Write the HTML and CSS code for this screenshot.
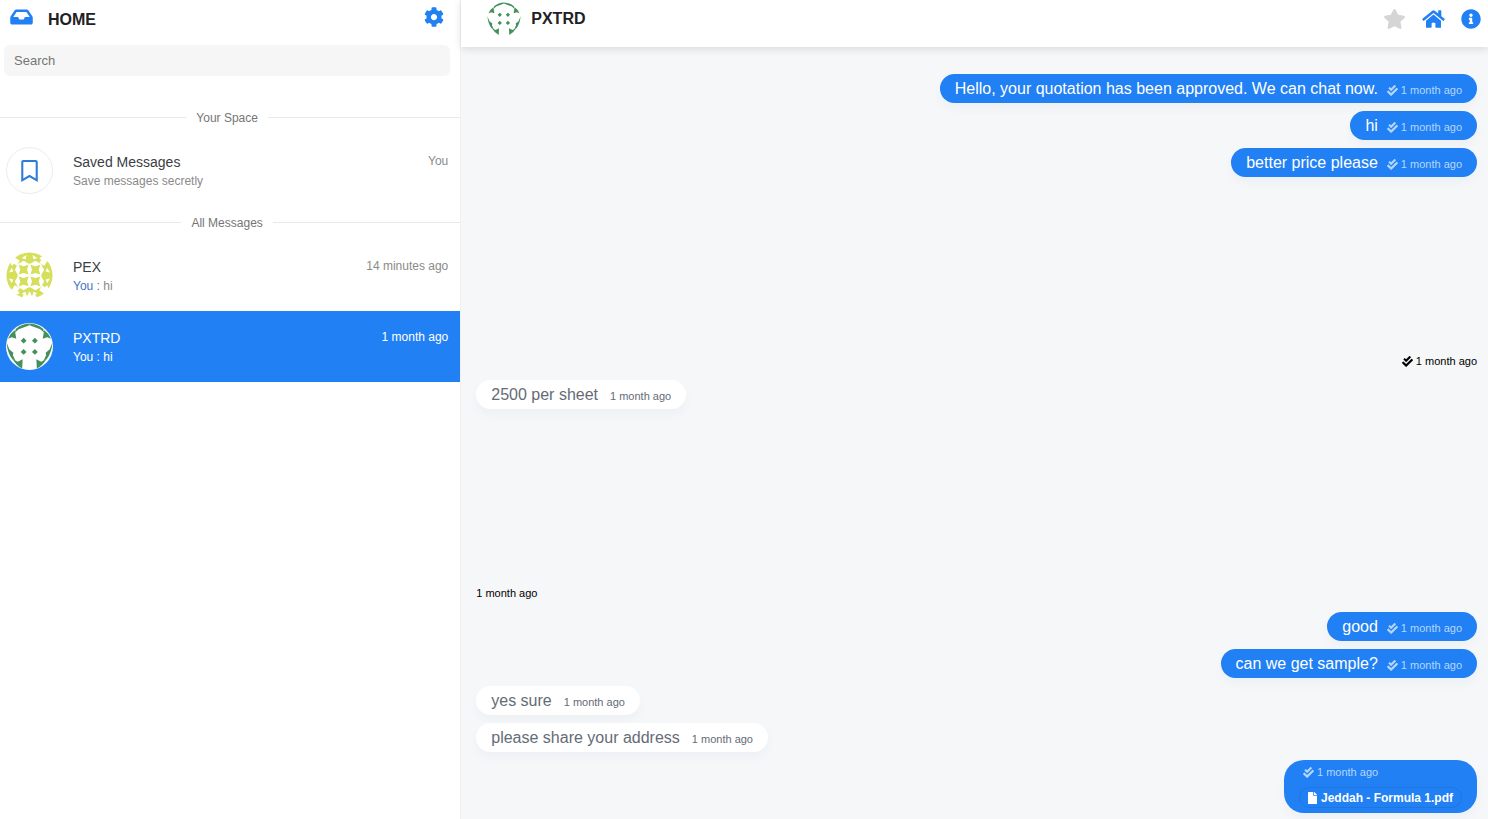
FILE: index.html
```html
<!DOCTYPE html>
<html lang="en">
<head>
<meta charset="utf-8">
<title>Messenger</title>
<link rel="stylesheet" href="styles.css">
</head>
<body>
<svg class="sprite" aria-hidden="true">
  <symbol id="inbox" viewBox="0 0 576 512"><path d="M567.938 243.908L462.25 85.374A48.003 48.003 0 0 0 422.311 64H153.689a48 48 0 0 0-39.938 21.374L8.062 243.908A47.994 47.994 0 0 0 0 270.533V400c0 26.51 21.49 48 48 48h480c26.51 0 48-21.49 48-48V270.533a47.994 47.994 0 0 0-8.062-26.625zM162.252 128h251.497l85.333 128H376l-32 64H232l-32-64H76.918l85.334-128z"/></symbol>
  <symbol id="cog" viewBox="0 0 512 512"><path d="M487.4 315.7l-42.6-24.6c4.3-23.2 4.3-47 0-70.2l42.6-24.6c4.9-2.8 7.1-8.6 5.5-14-11.1-35.6-30-67.8-54.7-94.6-3.8-4.1-10-5.1-14.8-2.3L380.8 110c-17.9-15.4-38.5-27.3-60.8-35.1V25.8c0-5.6-3.9-10.5-9.4-11.7-36.7-8.2-74.3-7.8-109.2 0-5.5 1.2-9.4 6.1-9.4 11.7V75c-22.2 7.9-42.8 19.8-60.8 35.1L88.7 85.5c-4.9-2.8-11-1.9-14.8 2.3-24.7 26.7-43.6 58.9-54.7 94.6-1.7 5.4.6 11.2 5.5 14L67.3 221c-4.3 23.2-4.3 47 0 70.2l-42.6 24.6c-4.9 2.8-7.1 8.6-5.5 14 11.1 35.6 30 67.8 54.7 94.6 3.8 4.1 10 5.1 14.8 2.3l42.6-24.6c17.9 15.4 38.5 27.3 60.8 35.1v49.2c0 5.6 3.9 10.5 9.4 11.7 36.7 8.2 74.3 7.8 109.2 0 5.5-1.2 9.4-6.1 9.4-11.7v-49.2c22.2-7.9 42.8-19.8 60.8-35.1l42.6 24.6c4.9 2.8 11 1.9 14.8-2.3 24.7-26.7 43.6-58.9 54.7-94.6 1.5-5.5-.7-11.3-5.6-14.1zM256 336c-44.1 0-80-35.9-80-80s35.9-80 80-80 80 35.9 80 80-35.9 80-80 80z"/></symbol>
  <symbol id="star" viewBox="0 0 576 512"><path d="M259.3 17.8L194 150.2 47.9 171.5c-26.2 3.8-36.7 36.1-17.7 54.6l105.7 103-25 145.5c-4.5 26.3 23.2 46 46.4 33.7L288 439.6l130.7 68.7c23.2 12.2 50.9-7.4 46.4-33.7l-25-145.5 105.7-103c19-18.5 8.5-50.8-17.7-54.6L382 150.2 316.7 17.8c-11.7-23.6-45.6-23.9-57.4 0z"/></symbol>
  <symbol id="home" viewBox="0 0 576 512"><path d="M280.37 148.26L96 300.11V464a16 16 0 0 0 16 16l112.06-.29a16 16 0 0 0 15.92-16V368a16 16 0 0 1 16-16h64a16 16 0 0 1 16 16v95.64a16 16 0 0 0 16 16.05L464 480a16 16 0 0 0 16-16V300L295.67 148.26a12.19 12.19 0 0 0-15.3 0zM571.6 251.47L488 182.56V44.05a12 12 0 0 0-12-12h-56a12 12 0 0 0-12 12v72.61L318.47 43a48 48 0 0 0-61 0L4.34 251.47a12 12 0 0 0-1.6 16.9l25.5 31A12 12 0 0 0 45.15 301l235.22-193.74a12.19 12.19 0 0 1 15.3 0L530.9 301a12 12 0 0 0 16.9-1.6l25.5-31a12 12 0 0 0-1.7-16.93z"/></symbol>
  <symbol id="info" viewBox="0 0 512 512"><path d="M256 8C119.043 8 8 119.083 8 256c0 136.997 111.043 248 248 248s248-111.003 248-248C504 119.083 392.957 8 256 8zm0 110c23.196 0 42 18.804 42 42s-18.804 42-42 42-42-18.804-42-42 18.804-42 42-42zm56 254c0 6.627-5.373 12-12 12h-88c-6.627 0-12-5.373-12-12v-24c0-6.627 5.373-12 12-12h12v-64h-12c-6.627 0-12-5.373-12-12v-24c0-6.627 5.373-12 12-12h64c6.627 0 12 5.373 12 12v100h12c6.627 0 12 5.373 12 12v24z"/></symbol>
  <symbol id="check" viewBox="0 0 512 512"><path d="M505 174.8l-39.6-39.6c-9.4-9.4-24.6-9.4-33.9 0L192 374.7 80.6 263.2c-9.4-9.4-24.6-9.4-33.9 0L7 302.900c-9.4 9.4-9.4 24.6 0 34L175 505c9.4 9.4 24.6 9.4 33.9 0l296-296.2c9.4-9.5 9.4-24.7.1-34zm-324.3 106c6.2 6.3 16.4 6.3 22.6 0l208-208.2c6.2-6.3 6.2-16.4 0-22.6L366.1 4.7c-6.2-6.3-16.4-6.3-22.6 0L192 156.2l-55.4-55.5c-6.2-6.3-16.4-6.3-22.6 0L68.7 146c-6.2 6.3-6.2 16.4 0 22.6l112 112.2z"/></symbol>
  <symbol id="file" viewBox="0 0 384 512"><path d="M224 136V0H24C10.7 0 0 10.7 0 24v464c0 13.3 10.7 24 24 24h336c13.3 0 24-10.7 24-24V160H248c-13.2 0-24-10.8-24-24zm160-14.1v6.1H256V0h6.1c6.4 0 12.5 2.5 17 7l97.9 98c4.5 4.5 7 10.6 7 16.9z"/></symbol>
  <symbol id="bookmark" viewBox="0 0 384 512"><path d="M336 0H48C21.49 0 0 21.49 0 48v464l192-112 192 112V48c0-26.51-21.49-48-48-48zm0 428.43l-144-84-144 84V54a6 6 0 0 1 6-6h276c3.314 0 6 2.683 6 5.996V428.43z"/></symbol>
  <symbol id="face-green" viewBox="0 0 48 48">
    <circle cx="24" cy="24" r="24" fill="#fff"/>
    <g fill="#43905a">
      <path d="M18 15l3 3-3 3-3-3zM29.500 15l3 3-3 3-3-3zM18 26.500l3 3-3 3-3-3zM29.500 26.500l3 3-3 3-3-3z"/>
      <g id="half">
        <path d="M10 6Q16 1 24 .6V2.200L13 6.500 9 10z"/>
        <path d="M2 16Q4 11 9 7.500L10.500 16 6 14.500z"/>
        <path d="M.6 20L3.500 27 7.500 30.500 7 33 9.500 38 6.500 37Q1.500 31 .6 20z"/>
        <path d="M6.500 36.500L12 39.500 17 37 16.500 46.500Q10.500 43.500 6.500 36.500z"/>
      </g>
      <use href="#half" transform="matrix(-1 0 0 1 48 0)"/>
    </g>
  </symbol>
  <symbol id="face-lime" viewBox="0 0 48 48">
    <circle cx="24" cy="24" r="23.500" fill="#d5df5b"/>
    <g fill="#fff">
      <path d="M12 12h24v24H12z"/>
      <g id="side">
        <path d="M12 12.500L18 9l6 3.500L30 9l6 3.500z"/>
        <path d="M16 6l5-3-1 4.500zM32 6l-5-3 1 4.500z"/>
        <path d="M9 5.500L14 9 11 14 8.500 12 6 14 4 10z"/>
      </g>
      <use href="#side" transform="rotate(90 24 24)"/>
      <use href="#side" transform="rotate(180 24 24)"/>
      <use href="#side" transform="rotate(270 24 24)"/>
      <path d="M16 48l3-7 2.500 4L24 40l2.500 5 2.500-4 3 7z"/>
    </g>
    <path fill="#d5df5b" d="M13 13l5 1.500L23 13l-1.500 5L23 23l-5-1.500L13 23l1.500-5zM25 13l5 1.500L35 13l-1.500 5L35 23l-5-1.500L25 23l1.500-5zM13 25l5 1.500L23 25l-1.500 5L23 35l-5-1.500L13 35l1.500-5zM25 25l5 1.500L35 25l-1.500 5L35 35l-5-1.500L25 35l1.500-5z"/>
  </symbol>
</svg>
<div class="messenger">
  <aside class="sidebar">
    <header class="sidebar-head">
      <a href="#" class="brand"><svg class="icon-inbox"><use href="#inbox"/></svg><span>HOME</span></a>
      <button class="icon-button" aria-label="Settings"><svg class="icon-20"><use href="#cog"/></svg></button>
    </header>
    <div class="search"><input type="text" aria-label="Search" placeholder="Search"></div>
    <h2 class="divider"><span>Your Space</span></h2>
    <a href="#" class="contact">
      <span class="avatar saved"><svg><use href="#bookmark"/></svg></span>
      <span class="contact-body"><span class="contact-name">Saved Messages</span><span class="contact-last">Save messages secretly</span></span>
      <span class="contact-time">You</span>
    </a>
    <h2 class="divider"><span>All Messages</span></h2>
    <a href="#" class="contact">
      <span class="avatar"><svg><use href="#face-lime"/></svg></span>
      <span class="contact-body"><span class="contact-name">PEX</span><span class="contact-last"><span class="you">You :</span> hi</span></span>
      <span class="contact-time">14 minutes ago</span>
    </a>
    <a href="#" class="contact active">
      <span class="avatar"><svg><use href="#face-green"/></svg></span>
      <span class="contact-body"><span class="contact-name">PXTRD</span><span class="contact-last"><span class="you">You :</span> hi</span></span>
      <span class="contact-time">1 month ago</span>
    </a>
  </aside>
  <main class="chat">
    <header class="chat-head">
      <a href="#" class="peer"><svg><use href="#face-green"/></svg><span>PXTRD</span></a>
      <nav class="tools">
        <button class="icon-button muted" aria-label="Favourite"><svg class="icon-wide"><use href="#star"/></svg></button>
        <a href="#" class="icon-button" aria-label="Home"><svg class="icon-wide"><use href="#home"/></svg></a>
        <button class="icon-button" aria-label="Details"><svg class="icon-20"><use href="#info"/></svg></button>
      </nav>
    </header>
    <section class="thread">
      <p class="bubble mine">Hello, your quotation has been approved. We can chat now.<span class="time"><svg><use href="#check"/></svg>1 month ago</span></p>
      <p class="bubble mine">hi<span class="time"><svg><use href="#check"/></svg>1 month ago</span></p>
      <p class="bubble mine">better price please<span class="time"><svg><use href="#check"/></svg>1 month ago</span></p>
      <figure class="photo sent"><div class="photo-image"></div><figcaption><svg><use href="#check"/></svg>1 month ago</figcaption></figure>
      <p class="bubble">2500 per sheet<span class="time">1 month ago</span></p>
      <figure class="photo"><div class="photo-image"></div><figcaption>1 month ago</figcaption></figure>
      <p class="bubble mine">good<span class="time"><svg><use href="#check"/></svg>1 month ago</span></p>
      <p class="bubble mine">can we get sample?<span class="time"><svg><use href="#check"/></svg>1 month ago</span></p>
      <p class="bubble">yes sure<span class="time">1 month ago</span></p>
      <p class="bubble">please share your address<span class="time">1 month ago</span></p>
      <div class="bubble mine attachment"><span class="time"><svg><use href="#check"/></svg>1 month ago</span><a href="#" class="download"><svg><use href="#file"/></svg>Jeddah - Formula 1.pdf</a></div>
    </section>
  </main>
</div>
</body>
</html>
```
FILE: styles.css
```css
* { box-sizing: border-box; }
body {
  margin: 0;
  background: #fff;
  color: #202124;
  font-family: "Liberation Sans", Arial, sans-serif;
  font-size: 16px;
}
a { color: inherit; text-decoration: none; }
svg { display: block; flex: none; fill: currentColor; }
.sprite { position: absolute; width: 0; height: 0; }

.messenger { display: flex; min-height: 100vh; }

/* Sidebar */
.sidebar {
  flex: 0 0 31%;
  min-width: 0;
  border-right: 1px solid #eef0f4;
  overflow: hidden;
}
.sidebar-head {
  display: flex;
  align-items: center;
  justify-content: space-between;
  height: 38px;
  padding: 0 16px 0 10px;
}
.brand { display: flex; align-items: center; gap: 15px; font-weight: bold; }
.brand .icon-inbox { width: 23px; height: 20px; color: #2180f3; margin-bottom: 4px; }
.brand span { padding-top: 2px; }
.sidebar-head .icon-button { margin-bottom: 4px; }
.icon-button {
  display: block;
  padding: 0;
  border: 0;
  background: none;
  color: #2180f3;
  cursor: pointer;
}
.icon-button.muted { color: #d5d5d5; }
.icon-20 { width: 20px; height: 20px; }
.icon-wide { width: 23px; height: 20px; }
.search { padding: 7px 10px 25px 4px; }
.search input {
  display: block;
  width: 100%;
  height: 31px;
  padding: 0 10px;
  border: 0;
  border-radius: 6px;
  background: #f6f6f6;
  font: 13px "Liberation Sans", Arial, sans-serif;
}
.search input::placeholder { color: #757575; opacity: 1; }
.divider {
  display: flex;
  align-items: center;
  gap: 10px;
  height: 34px;
  margin: 0 0 0 -6px;
  color: #757575;
  font-size: 12px;
  font-weight: normal;
}
.divider::before, .divider::after {
  content: "";
  flex: 1;
  height: 1px;
  margin-bottom: 1px;
  background: #e8e9eb;
}
.contact {
  display: flex;
  height: 71px;
  padding: 12px 12px 11px 6px;
  color: #8a8a8a;
  font-size: 12px;
}
.avatar {
  display: flex;
  align-items: center;
  justify-content: center;
  flex: none;
  width: 47px;
  height: 47px;
  border-radius: 50%;
}
.avatar svg { width: 47px; height: 47px; }
.avatar.saved { border: 1px solid #efeaf3; color: #2c7bd6; }
.avatar.saved svg { width: 17px; height: 22px; }
.contact-body {
  display: flex;
  flex: 1;
  flex-direction: column;
  gap: 2px;
  padding: 7px 0 0 20px;
}
.contact-name { color: #3b3e42; font-size: 14px; line-height: 17px; }
.contact-last { line-height: 17px; }
.contact-time { padding-top: 6px; line-height: 17px; }
.you { color: #3f74c9; }
.active { background: #2180f3; }
.active, .active .contact-name, .active .you { color: #fff; }

/* Conversation */
.chat { flex: 1; min-width: 0; background: #f5f7f9; }
.chat-head {
  display: flex;
  align-items: center;
  justify-content: space-between;
  height: 47px;
  padding: 0 7px 9px 26px;
  background: #fff;
  box-shadow: 0 2px 8px rgba(0, 0, 0, .12);
}
.peer { display: flex; align-items: center; gap: 10px; font-weight: bold; }
.peer svg { width: 34px; height: 34px; }
.tools { display: flex; align-items: center; gap: 16px; }
.thread {
  display: flex;
  flex-direction: column;
  align-items: flex-start;
  gap: 8px;
  padding: 27px 11px 6px 15px;
}
.bubble {
  display: flex;
  align-items: center;
  min-height: 29px;
  margin: 0;
  padding: 0 15px;
  border-radius: 20px;
  background: #fff;
  color: #656b75;
  box-shadow: 0 6px 11px rgba(18, 67, 105, .03);
}
.time {
  display: flex;
  align-items: center;
  gap: 3px;
  padding: 3px 0 0 12px;
  font-size: 11px;
  line-height: 14px;
}
.time svg, .photo svg { width: 11px; height: 11px; }
.mine { align-self: flex-end; background: #2180f3; color: #fff; }
.mine .time { padding-left: 9px; color: #b5d7ff; }
.photo { display: flex; flex-direction: column; width: 250px; margin: 0; }
.photo-image { height: 169px; }
.photo figcaption {
  display: flex;
  align-items: center;
  gap: 3px;
  height: 18px;
  padding-bottom: 4px;
  color: #000;
  font-size: 11px;
}
.sent { align-self: flex-end; }
.sent figcaption { justify-content: flex-end; }
.attachment { flex-direction: column; align-items: flex-start; gap: 8px; padding: 5px 15px; }
.attachment .time { padding: 0 0 0 4px; }
.download {
  display: flex;
  align-items: center;
  gap: 4px;
  height: 21px;
  padding: 0 8px;
  border: 1px solid #1e76e0;
  border-radius: 20px;
  font-size: 12px;
  font-weight: bold;
}
.download svg { width: 9px; height: 12px; }
```
